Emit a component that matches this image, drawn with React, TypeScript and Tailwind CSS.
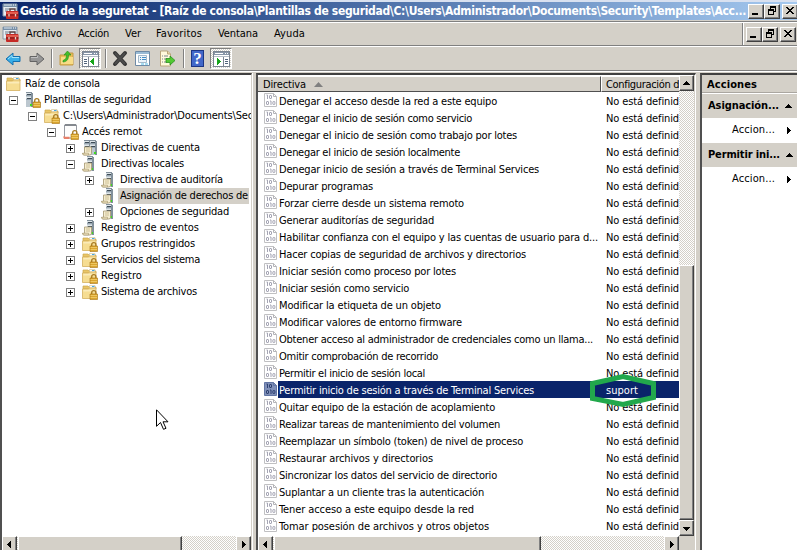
import React, { useLayoutEffect, useRef, useState } from "react";

/* Text that spreads or tightens its tracking to occupy a given width. */
function T({ w, className = "", children }: { w: number; className?: string; children: string }) {
  const ref = useRef<HTMLSpanElement>(null);
  const [ls, setLs] = useState(0);
  useLayoutEffect(() => {
    if (ref.current) {
      const natural = ref.current.getBoundingClientRect().width;
      setLs((w - natural) / children.length);
    }
  }, []);
  return (
    <span ref={ref} className={"inline-block shrink-0 whitespace-pre " + className} style={{ letterSpacing: ls + "px" }}>
      {children}
    </span>
  );
}

const raised =
  "bg-[#d4d0c8] border border-t-white border-l-white border-r-[#404040] border-b-[#404040] shadow-[inset_-1px_-1px_0_#808080]";
const dither = "bg-[repeating-conic-gradient(#ffffff_0_25%,#d4d0c8_0_50%)] bg-[length:2px_2px]";

function Arrow({ dir }: { dir: "up" | "down" | "left" | "right" }) {
  const d = {
    up: "M4 2h1v1h1v1h1v1h1v1H1V5h1V4h1V3h1z",
    down: "M1 3h7v1H7v1H6v1H5v1H4V6H3V5H2V4H1z",
    left: "M6 1v7H5V7H4V6H3V5H2V4h1V3h1V2h1V1z",
    right: "M3 1v7h1V7h1V6h1V5h1V4H6V3H5V2H4V1z",
  }[dir];
  return (
    <svg width="9" height="9" viewBox="0 0 9 9" shapeRendering="crispEdges">
      <path d={d} />
    </svg>
  );
}

function ScrollButton({ dir }: { dir: "up" | "down" | "left" | "right" }) {
  return (
    <div className={"flex h-[16px] w-[15px] shrink-0 items-center justify-center " + raised}>
      <Arrow dir={dir} />
    </div>
  );
}

function WindowButtons() {
  const base = "flex h-[15px] items-center justify-center " + raised;
  return (
    <div className="flex shrink-0">
      <div className={base + " w-[16px]"}>
        <svg width="12" height="12" shapeRendering="crispEdges"><path d="M2 8h6v2H2z" /></svg>
      </div>
      <div className={base + " w-[16px]"}>
        <svg width="12" height="12" shapeRendering="crispEdges">
          <path d="M4 1h6v6H8V6h1V3H5v1H4zM2 4h6v6H2zM3 6v3h4V6z" fillRule="evenodd" />
        </svg>
      </div>
      <div className={base + " ml-[2px] w-[16px]"}>
        <svg width="12" height="12" shapeRendering="crispEdges">
          <path d="M2 2h2v1h1v1h2V3h1V2h2v1H9v1H8v1H7v1h1v1h1v1h1v1H8V8H7V7H5v1H4v1H2V8h1V7h1V6h1V5H4V4H3V3H2z" />
        </svg>
      </div>
    </div>
  );
}

function ConsoleIcon() {
  return (
    <svg width="17" height="17" viewBox="0 0 17 17">
      <path d="M1 1h14v12H1z" fill="#e8edf2" stroke="#8b98a7" />
      <path d="M1 1h14v3H1z" fill="#7890a8" />
      <path d="M2 2h8" stroke="#e0e8f0" />
      <path d="M11 2h1m1 0h1" stroke="#fff" />
      <path d="M3 6h5M3 8h3" stroke="#6f7d8c" />
      <path d="M8 8V6h5v2" fill="none" stroke="#594040" strokeWidth="1.3" />
      <rect x="4" y="8" width="12.5" height="8" rx="1" fill="#c52a26" />
      <path d="M4.5 9h11.5v2H4.5z" fill="#e35d50" />
      <path d="M4 12h12.5" stroke="#7b1515" />
      <path d="M7 11v2.5M13.5 11v2.5" stroke="#e2d4c8" strokeWidth="1.3" />
    </svg>
  );
}

function Lock() {
  return (
    <g>
      <path d="M9.700 10.500V8.700a2 2 0 0 1 4.200 0v1.800" fill="none" stroke="#a87a20" strokeWidth="1.300" />
      <path d="M8 10h7.500v5.500H8z" fill="#dba62e" stroke="#a87413" strokeWidth=".6" />
      <path d="M8.500 11.500h6.500M8.500 13.500h6.500" stroke="#f3cf70" strokeWidth=".8" />
    </g>
  );
}

function FolderIcon({ lock = false }: { lock?: boolean }) {
  return (
    <svg width="17" height="16" viewBox="0 0 17 16" className="overflow-visible">
      <path d="M1 4V2h5l1 1h7v2H1z" fill="#e9c566" stroke="#cba64c" strokeWidth=".7" />
      <path d="M7.500 1.500h5.500v2.500H7.500z" fill="#f9fcff" stroke="#c8b274" strokeWidth=".5" />
      <path d="M10 2.500h2.500" stroke="#48a6df" />
      <path d="M.5 5h6l1-1h6.500v10.500H.5z" fill="#f6dd92" stroke="#d4b060" strokeWidth=".8" />
      <path d="M1.300 5.800h12v1.700h-12z" fill="#fbebb9" />
      {lock && <Lock />}
    </svg>
  );
}

/* Server case: lit front face, darker side, two drive slots and a power light. */
function Tower({ x = 0 }: { x?: number }) {
  return (
    <g transform={`translate(${x} 0)`} shapeRendering="crispEdges">
      <path d="M2 0h6v1h1v14H2z" fill="#82909b" />
      <path d="M2 1h5v14H2z" fill="#bcc7cf" />
      <path d="M2 1h5v1H2zM2 5h5v1H2z" fill="#dfe6ea" />
      <path d="M3 2h4v1H3zM3 6h4v1H3z" fill="#3d4b56" />
      <path d="M2 3h5v1H2zM2 7h5v1H2z" fill="#98a6b1" />
      <path d="M6 12h2v2H6z" fill="#3fdc20" />
    </g>
  );
}

function Scroll() {
  return (
    <g>
      <path d="M2.500 7h7v6.500l-1 1.500H1.500L.5 13.500h2z" fill="#f5edd0" stroke="#a3966f" strokeWidth=".8" />
      <path d="M4 9h4M4 11h4" stroke="#c4b588" strokeWidth=".8" />
      <path d="M.5 13.200h6V15h-5z" fill="#efe3bd" stroke="#a3966f" strokeWidth=".6" />
    </g>
  );
}

function TreeIcon({ kind }: { kind: string }) {
  if (kind === "folder") return <FolderIcon />;
  if (kind === "lockfolder") return <FolderIcon lock />;
  return (
    <svg width="17" height="16" viewBox="0 0 17 16" className="overflow-visible">
      {kind === "serverlock" && <><Tower x={-1} /><Lock /></>}
      {kind === "template" && (
        <>
          <path d="M1.500 1h12v13h-12z" fill="#fdfdfd" stroke="#8c9097" strokeWidth=".9" />
          <path d="M2 1h11" stroke="#555b64" strokeWidth="1.200" />
          <path d="M0 12.500h6.500V15H1z" fill="#e8806a" />
          <path d="M2 12h5" stroke="#fff" />
          <Lock />
        </>
      )}
      {kind === "double" && <><Tower x={0} /><Tower x={6} /><Scroll /></>}
      {kind === "policy" && <><Tower x={3} /><Scroll /></>}
    </svg>
  );
}

function Expander({ state }: { state: string }) {
  return (
    <svg width="9" height="9" shapeRendering="crispEdges" className="shrink-0">
      {state && (
        <>
          <path d="M.5.5h8v8h-8z" fill="#fff" stroke="#808080" />
          <path d={state === "+" ? "M2 4h5v1H2zM4 2h1v5H4z" : "M2 4h5v1H2z"} />
        </>
      )}
    </svg>
  );
}

const tree: [string, number, string, string, string][] = [
  ["Plantillas de seguridad", 107, "-", "serverlock", "pl-[9px]"],
  ["C:\\Users\\Administrador\\Documents\\Sec", 190, "-", "lockfolder", "pl-[28px]"],
  ["Accés remot", 60, "-", "template", "pl-[47px]"],
  ["Directivas de cuenta", 99, "+", "double", "pl-[66px]"],
  ["Directivas locales", 83, "-", "policy", "pl-[66px]"],
  ["Directiva de auditoría", 103, "+", "policy", "pl-[85px]"],
  ["Asignación de derechos de", 128, "", "policy", "pl-[85px]"],
  ["Opciones de seguridad", 109, "+", "policy", "pl-[85px]"],
  ["Registro de eventos", 98, "+", "policy", "pl-[66px]"],
  ["Grupos restringidos", 94, "+", "lockfolder", "pl-[66px]"],
  ["Servicios del sistema", 99, "+", "lockfolder", "pl-[66px]"],
  ["Registro", 41, "+", "lockfolder", "pl-[66px]"],
  ["Sistema de archivos", 96, "+", "lockfolder", "pl-[66px]"],
];

const policies: [string, number][] = [
  ["Denegar el acceso desde la red a este equipo", 218],
  ["Denegar el inicio de sesión como servicio", 193],
  ["Denegar el inicio de sesión como trabajo por lotes", 238],
  ["Denegar el inicio de sesión localmente", 181],
  ["Denegar inicio de sesión a través de Terminal Services", 260],
  ["Depurar programas", 94],
  ["Forzar cierre desde un sistema remoto", 185],
  ["Generar auditorías de seguridad", 155],
  ["Habilitar confianza con el equipo y las cuentas de usuario para d...", 319],
  ["Hacer copias de seguridad de archivos y directorios", 247],
  ["Iniciar sesión como proceso por lotes", 177],
  ["Iniciar sesión como servicio", 130],
  ["Modificar la etiqueta de un objeto", 162],
  ["Modificar valores de entorno firmware", 183],
  ["Obtener acceso al administrador de credenciales como un llama...", 314],
  ["Omitir comprobación de recorrido", 159],
  ["Permitir el inicio de sesión local", 146],
  ["Permitir inicio de sesión a través de Terminal Services", 255],
  ["Quitar equipo de la estación de acoplamiento", 216],
  ["Realizar tareas de mantenimiento del volumen", 221],
  ["Reemplazar un símbolo (token) de nivel de proceso", 244],
  ["Restaurar archivos y directorios", 154],
  ["Sincronizar los datos del servicio de directorio", 218],
  ["Suplantar a un cliente tras la autenticación", 205],
  ["Tener acceso a este equipo desde la red", 195],
  ["Tomar posesión de archivos y otros objetos", 210],
];

function PolicyIcon({ selected }: { selected: boolean }) {
  const ink = selected ? "#2c3f70" : "#a5a5b4";
  return (
    <svg width="14" height="15" viewBox="0 0 14 15" className="shrink-0">
      <path d="M.5.5h9l3 3V13.500H.5z" fill={selected ? "#8090b8" : "#fff"} stroke={selected ? "#6175a4" : "#c0c0c2"} />
      <path d="M9.500.5v3h3" fill="none" stroke={selected ? "#6175a4" : "#b4b4b8"} />
      <path d="M2.500 2h1v4" fill="none" stroke={ink} />
      <rect x="5.500" y="2.500" width="2" height="3" rx=".5" fill="none" stroke={ink} />
      <rect x="2.500" y="8.500" width="2" height="3" rx=".5" fill="none" stroke={ink} />
      <path d="M6 8h1v4" fill="none" stroke={ink} />
      <rect x="8.900" y="8.500" width="2" height="3" rx=".5" fill="none" stroke={ink} />
    </svg>
  );
}

function Toggle({ flip }: { flip?: boolean }) {
  return (
    <div className={"flex h-[21px] w-[22px] items-center justify-center border border-t-[#808080] border-l-[#808080] border-r-white border-b-white " + dither}>
      <svg width="17" height="16" shapeRendering="crispEdges">
        <path d="M.5.5h16v15H.5z" fill="#fff" stroke="#7c8591" />
        <path d="M1 1h15v3H1z" fill="#8795a7" />
        <path d="M2 2.500h8M12 2.500h1M14 2.500h1" stroke="#fff" />
        <path d="M1 5.500h15" stroke="#b5bdc7" />
        <path d={flip ? "M10.500 6v9" : "M6.500 6v9"} stroke="#7c8591" />
        <path d={flip ? "M12 8.500h3M12 10.500h3M12 12.500h3" : "M2 8.500h3M2 10.500h3M2 12.500h3"} stroke="#52647b" />
        <path d={flip ? "M4 7v7l4-3.500z" : "M12 7v7l-4-3.500z"} fill="#18a51a" />
      </svg>
    </div>
  );
}

function Sep() {
  return <div className="h-[19px] w-[2px] border-l border-r border-l-[#808080] border-r-white" />;
}

function Toolbar() {
  const arrow = "M1 8l7-6v3.5h7v5H8V14z";
  return (
    <div className="flex h-[24px] shrink-0 items-center border-b border-[#808080] pl-[5px]">
      <svg width="17" height="16">
        <path d={arrow} fill="#37aee9" stroke="#1670ae" /><path d="M3 8l4-3.5v2h7" fill="none" stroke="#a1e4fb" />
      </svg>
      <svg width="17" height="16" className="ml-[6px]">
        <path d={arrow} transform="translate(17 0) scale(-1 1)" fill="#969696" stroke="#646464" />
        <path d="M3 6.5h6.5v-2" fill="none" stroke="#c0c0c0" />
      </svg>
      <div className="ml-[6px]"><Sep /></div>
      <svg width="17" height="17" className="ml-[6px]">
        <path d="M1 5h5l1-2h7v12H1z" fill="#e9bf57" stroke="#c39a45" />
        <path d="M2 7h12v7H2z" fill="#f8dc86" />
        <path d="M4 10.500c3-1 3.500-3 3.500-5.500H5L8.500 1 12 5H9.500c0 4-1 6.500-5.500 7z" fill="#43bf29" stroke="#2f9422" strokeWidth=".7" />
      </svg>
      <div className="ml-[3px]"><Toggle /></div>
      <div className="ml-[4px]"><Sep /></div>
      <svg width="17" height="17" className="ml-[5px]">
        <path d="M3 3l10 11M13 3L3 14" stroke="#353535" strokeWidth="4" strokeLinecap="round" />
        <path d="M3 3l10 11M13 3L3 14" stroke="#4c4c4c" strokeWidth="2" />
      </svg>
      <svg width="16" height="17" className="ml-[6px]">
        <path d="M.5 1.500h14v14H.5z" fill="#fff" stroke="#6e8aa5" />
        <path d="M1 3h13" stroke="#99bbd5" strokeWidth="2" />
        <path d="M3.500 5.500h8v7h-8z" fill="#edf5fb" stroke="#a3b9ca" />
        <path d="M5 7.500h1m1 0h4M5 9.500h1m1 0h4" stroke="#448dc5" />
        <path d="M6 14h3m1 0h3" stroke="#53bce6" />
      </svg>
      <svg width="17" height="17" className="ml-[8px]">
        <path d="M1.500 1h7l3 3v12h-10z" fill="#fff9dc" stroke="#b9a57c" />
        <path d="M8.500 1v3h3" fill="#ead7a3" stroke="#b9a57c" />
        <path d="M3 6h1m1 0h4M3 9h1m1 0h3M3 12h1m1 0h3" stroke="#7b848c" />
        <path d="M7 8.500h4V6l5 4.500-5 4.500v-2.500H7z" fill="#52c932" stroke="#299120" strokeWidth=".8" />
      </svg>
      <div className="ml-[7px]"><Sep /></div>
      <div className="ml-[6px] flex h-[17px] w-[13px] items-center justify-center border border-[#1c3685] bg-[#4268c9] font-['Liberation_Serif',serif] text-[17px] leading-[15px] font-bold text-white">?</div>
      <div className="ml-[6px]"><Toggle flip /></div>
    </div>
  );
}

export default function App() {
  return (
    <div className="relative flex h-[550px] w-[797px] flex-col overflow-hidden bg-[#d4d0c8] font-['DejaVu_Sans_Condensed','DejaVu_Sans',sans-serif] text-[11px] leading-[16px] text-black [font-stretch:condensed]">
      <div className="flex h-[22px] shrink-0 border-t-2 border-b border-t-[#d9e1f0] border-b-[#808080]">
        <div className="flex h-[18px] w-full items-center bg-gradient-to-r from-[#0a246a] to-[#a6caf0] pl-[2px]">
          <div className="w-[18px] shrink-0"><ConsoleIcon /></div>
          <div className="w-[728px] shrink-0 overflow-hidden font-bold text-white">
            <T w={726} className="text-[12px]">{"Gestió de la seguretat - [Raíz de consola\\Plantillas de seguridad\\C:\\Users\\Administrador\\Documents\\Security\\Templates\\Acc..."}</T>
          </div>
          <WindowButtons />
        </div>
      </div>
      <div className="flex h-[24px] shrink-0 border-t border-b border-t-white border-b-[#808080]">
        <div className="flex w-[743px] items-center border-r border-[#808080] pl-[2px]">
          <ConsoleIcon />
          <T w={36} className="ml-[7px]">Archivo</T>
          <T w={31} className="ml-[16px]">Acción</T>
          <T w={16} className="ml-[16px]">Ver</T>
          <T w={46} className="ml-[15px]">Favoritos</T>
          <T w={40} className="ml-[16px]">Ventana</T>
          <T w={31} className="ml-[16px]">Ayuda</T>
        </div>
        <div className="flex flex-1 items-center border-l border-white pl-[2px]"><WindowButtons /></div>
      </div>
      <div className="flex h-[25px] shrink-0 flex-col border-t border-white"><Toolbar /></div>
      <div className="flex min-h-0 flex-1 border-t border-white pt-[1px]">
        <div className="flex w-[252px] shrink-0 flex-col border-t-2 border-r border-l-2 border-t-[#404040] border-r-[#d4d0c8] border-l-[#505050] bg-white pt-px">
          <div className="flex min-h-0 flex-1 flex-col overflow-hidden">
            <div className="flex h-[16px] shrink-0 items-center pl-[4px]">
              <FolderIcon /><T w={75} className="ml-[2px]">Raíz de consola</T>
            </div>
            {tree.map(([label, w, state, kind, pad], i) => (
              <div key={i} className="flex h-[16px] shrink-0">
                <div className={"-ml-[2px] flex w-full items-center " + pad}>
                  <Expander state={state} />
                  <div className="ml-[7px] h-[16px] w-[17px] shrink-0"><TreeIcon kind={kind} /></div>
                  <div className={"h-[16px] w-0 flex-1 whitespace-nowrap pl-[2px] " + (i === 6 ? "bg-[#d4d0c8]" : "")}>
                    <T w={w}>{label}</T>
                  </div>
                </div>
              </div>
            ))}
          </div>
          <div className={"flex h-[14px] shrink-0 overflow-hidden " + dither}>
            <ScrollButton dir="left" />
            <div className={"ml-px h-[16px] w-[164px] " + raised} />
            <div className="flex-1" />
            <ScrollButton dir="right" />
          </div>
        </div>
        <div className="w-[4px] shrink-0 border-l border-white" />
        <div className="flex w-[440px] shrink-0 border-t-2 border-r border-l-2 border-t-[#404040] border-r-white border-l-[#505050] bg-white">
          <div className="flex w-[421px] shrink-0 flex-col pt-px">
            <div className="flex h-[16px] shrink-0 overflow-hidden bg-[#d4d0c8]">
              <div className="flex w-[343px] shrink-0 items-center border-t border-r border-b border-t-white border-r-[#505050] border-b-[#505050] pl-[5px]">
                <T w={43} className="relative top-px">Directiva</T>
                <svg width="9" height="5" className="ml-[8px]"><path d="M4.5 0L9 5H0z" fill="#808080" /></svg>
              </div>
              <div className="flex flex-1 items-center overflow-hidden border-t border-b border-l border-t-white border-b-[#505050] border-l-white pl-[4px]">
                <T w={79} className="relative top-px">Configuración de</T>
              </div>
            </div>
            <div className="flex min-h-0 flex-1 flex-col overflow-hidden">
              {policies.map(([label, w], i) => {
                const selected = i === 17;
                return (
                  <div key={i} className={"flex h-[17px] shrink-0 items-center pl-[6px] " + (selected ? "text-white" : "")}>
                    <PolicyIcon selected={selected} />
                    <div className={"flex h-[17px] flex-1 items-start overflow-hidden leading-[19px] " + (selected ? "bg-[#0a246a]" : "")}>
                      <div className="w-[328px] shrink-0 pl-[1px]"><T w={w}>{label}</T></div>
                      {selected ? <T w={32}>suport</T> : <T w={73}>No está definid</T>}
                    </div>
                  </div>
                );
              })}
            </div>
            <div className={"flex h-[14px] shrink-0 overflow-hidden " + dither}>
              <ScrollButton dir="left" />
              <div className={"ml-px h-[16px] w-[267px] " + raised} />
              <div className="flex-1" />
              <ScrollButton dir="right" />
            </div>
          </div>
          <div className={"flex w-[16px] flex-col " + dither}>
            <ScrollButton dir="up" />
            <div className="h-[174px]" />
            <div className={"h-[255px] w-[15px] " + raised} />
            <ScrollButton dir="down" />
            <div className="flex-1 bg-[#d4d0c8]" />
          </div>
          <div className="w-px bg-[#d4d0c8]" />
        </div>
        <div className="w-[4px] shrink-0" />
        <div className="flex flex-1 flex-col border-t-2 border-l-2 border-t-[#404040] border-l-[#505050] bg-white font-bold">
          <div className="flex h-[18px] items-center border-b border-[#aaa6a0] bg-[#d4d0c8] pl-[5px]"><T w={50} className="relative top-px">Acciones</T></div>
          {[{ name: "Asignación...", w: 71 }, { name: "Permitir ini...", w: 72 }].map((g) => (
            <div key={g.name}>
              <div className="mt-px flex h-[24px] items-center bg-[#d4d0c8] pl-[6px]">
                <T w={g.w}>{g.name}</T>
                <span className="ml-[5px]"><Arrow dir="up" /></span>
              </div>
              <div className="flex h-[24px] items-center pl-[30px] font-normal">
                <T w={43}>Accion...</T>
                <span className="ml-[9px]"><Arrow dir="right" /></span>
              </div>
            </div>
          ))}
        </div>
      </div>
      <svg className="absolute top-[372px] left-[588px]" width="70" height="37">
        <path d="M4.5 11.5L35 4.5l30.500 7v14L35 32.500l-30.500-6z" fill="none" stroke="#22a84c" strokeWidth="5" />
      </svg>
      <svg className="absolute top-[409px] left-[156px]" width="13" height="22">
        <path d="M.5.8v16.500l4-3.800 3 6.800 2.500-1-3-6.500h5z" fill="#fff" stroke="#000" />
      </svg>
    </div>
  );
}
